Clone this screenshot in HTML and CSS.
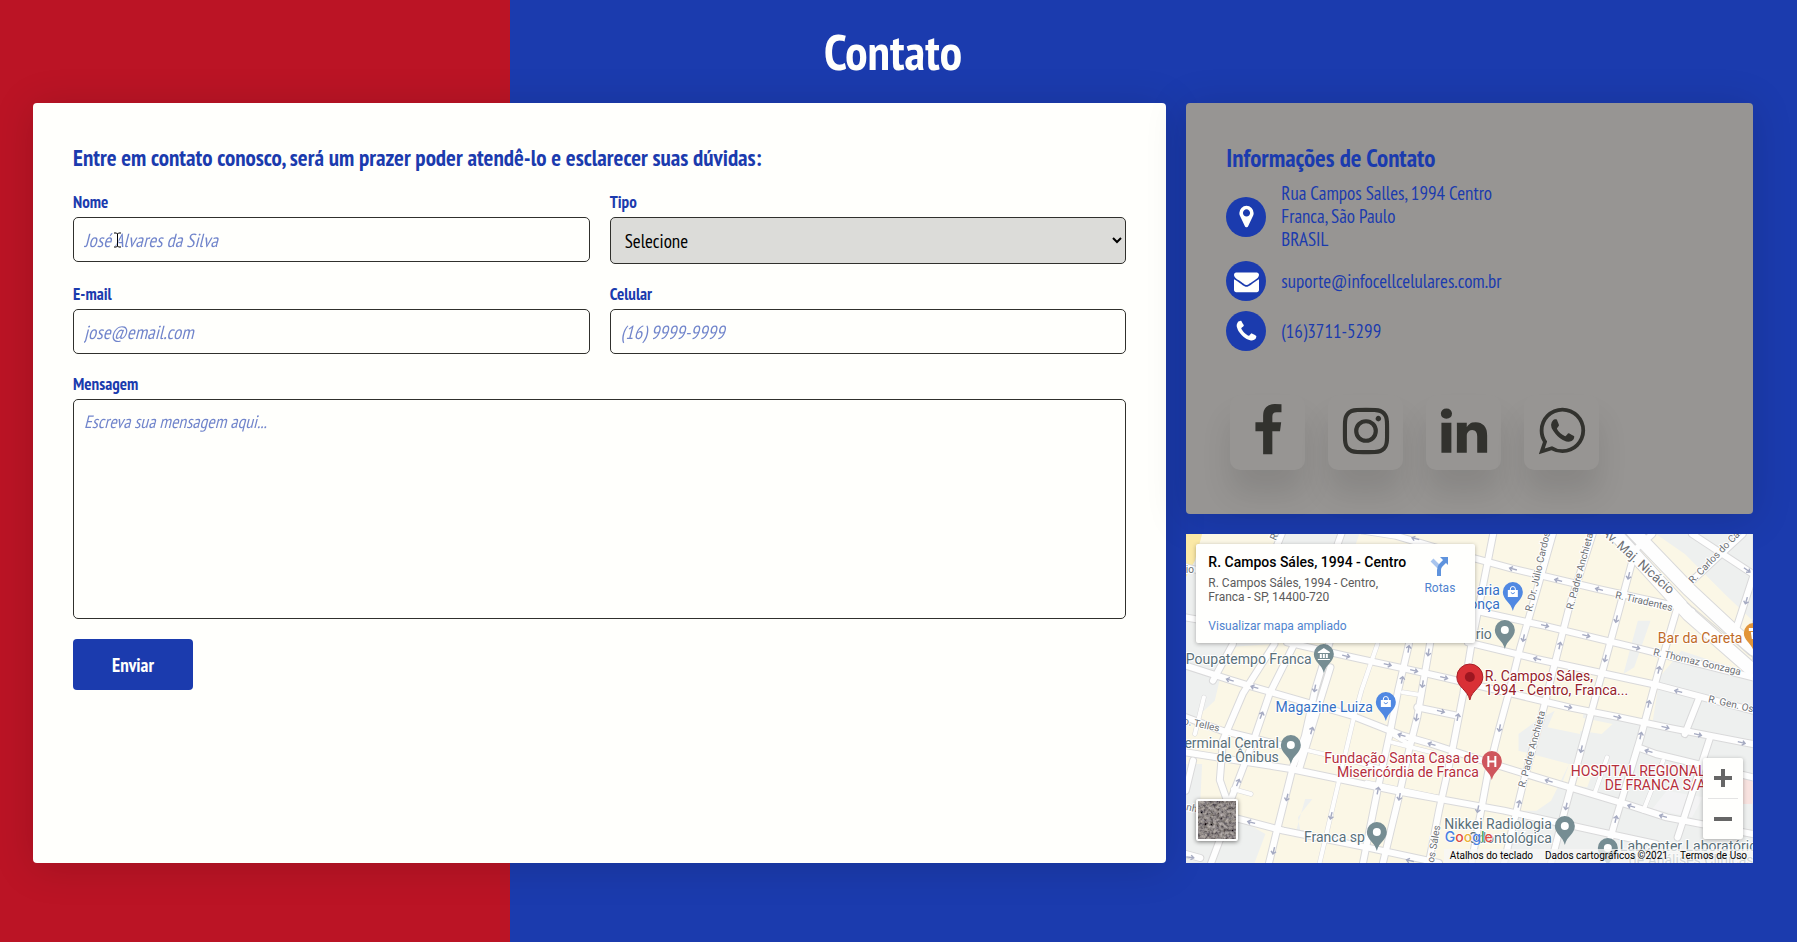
FILE: index.html
```html
<!DOCTYPE html>
<html lang="pt-BR">
<head>
<meta charset="utf-8">
<title>Contato</title>
<meta name="viewport" content="width=device-width, initial-scale=1">
<link rel="stylesheet" href="styles.css">
</head>
<body>
<main class="contact">
  <h1 class="contact-title">Contato</h1>
  <div class="contact-grid">
    <section class="card form-card">
      <h2 class="card-title form-title">Entre em contato conosco, será um prazer poder atendê-lo e esclarecer suas dúvidas:</h2>
      <form class="form">
        <div class="field">
          <label class="label" for="nome">Nome</label>
          <div class="control">
            <input class="input" id="nome" type="text" placeholder="José Alvares da Silva">
            <svg class="caret" viewBox="0 0 9 16" aria-hidden="true"><path class="caret-halo" d="M1 1H3.500L4.500 2L5.500 1H8M4.500 2V14M1 15H3.500L4.500 14L5.500 15H8"/><path class="caret-line" d="M1 1H3.500L4.500 2L5.500 1H8M4.500 2V14M1 15H3.500L4.500 14L5.500 15H8"/></svg>
          </div>
        </div>
        <div class="field">
          <label class="label" for="tipo">Tipo</label>
          <select class="input select" id="tipo"><option>Selecione</option></select>
        </div>
        <div class="field">
          <label class="label" for="email">E-mail</label>
          <input class="input" id="email" type="email" placeholder="jose@email.com">
        </div>
        <div class="field">
          <label class="label" for="celular">Celular</label>
          <input class="input" id="celular" type="tel" placeholder="(16) 9999-9999">
        </div>
        <div class="field field-wide">
          <label class="label" for="mensagem">Mensagem</label>
          <textarea class="input textarea" id="mensagem" placeholder="Escreva sua mensagem aqui..."></textarea>
        </div>
        <button class="submit" type="submit">Enviar</button>
      </form>
    </section>

    <section class="card info-card">
      <h2 class="card-title">Informações de Contato</h2>
      <ul class="info-list">
        <li class="info-item"><span class="info-icon"><svg viewBox="0 0 1792 1792"><path d="M1152 640q0-106-75-181t-181-75-181 75-75 181 75 181 181 75 181-75 75-181zm256 0q0 109-33 179l-364 774q-16 33-47.500 52t-67.500 19-67.500-19-46.500-52l-365-774q-33-70-33-179 0-212 150-362t362-150 362 150 150 362z"/></svg></span><span>Rua Campos Salles, 1994 Centro<br>Franca, São Paulo<br>BRASIL</span></li>
        <li class="info-item"><span class="info-icon"><svg viewBox="0 0 1792 1792"><path d="M1792 710v794q0 66-47 113t-113 47h-1472q-66 0-113-47t-47-113v-794q44 49 101 87 362 246 497 345 57 42 92.500 65.500t94.500 48 110 24.500h2q51 0 110-24.500t94.500-48 92.500-65.500q170-123 498-345 57-39 100-87zm0-294q0 79-49 151t-122 123q-376 261-468 325-10 7-42.500 31t-54 38.500-52 32.500-57.500 27-50 9h-2q-23 0-50-9t-57.500-27-52-32.500-54-38.500-42.500-31q-91-64-262-182.500t-205-142.500q-62-42-117-115.500t-55-136.500q0-78 41.500-130t118.500-52h1472q65 0 112.500 47t47.500 113z"/></svg></span><span>suporte@infocellcelulares.com.br</span></li>
        <li class="info-item"><span class="info-icon"><svg viewBox="0 0 1792 1792"><path d="M1600 1240q0 27-10 70.500t-21 68.500q-21 50-122 106-94 51-186 51-27 0-53-3.500t-57.500-12.500-47-14.500-55.500-20.500-49-18q-98-35-175-83-127-79-264-216t-216-264q-48-77-83-175-3-9-18-49t-20.500-55.500-14.500-47-12.500-57.500-3.500-53q0-92 51-186 56-101 106-122 25-11 68.500-21t70.500-10q14 0 21 3 18 6 53 76 11 19 30 54t35 63.500 31 53.500q3 4 17.500 25t21.500 35.500 7 28.500q0 20-28.500 50t-62 55-62 53-28.500 46q0 9 5 22.500t8.500 20.500 14 24 11.500 19q76 137 174 235t235 174q2 1 19 11.500t24 14 20.500 8.500 22.500 5q18 0 46-28.500t53-62 55-62 50-28.500q14 0 28.500 7t35.500 21.500 25 17.500q25 15 53.500 31t63.500 35 54 30q70 35 76 53 3 7 3 21z"/></svg></span><span>(16)3711-5299</span></li>
      </ul>
      <ul class="social">
        <li><a class="social-link" href="#" aria-label="Facebook"><svg viewBox="0 0 1792 1792"><path d="M1343 12v264h-157q-86 0-116 36t-30 108v189h293l-39 296h-254v759h-306v-759h-255v-296h255v-218q0-186 104-288.500t277-102.500q147 0 228 12z"/></svg></a></li>
        <li><a class="social-link" href="#" aria-label="Instagram"><svg viewBox="0 0 1792 1792"><path d="M1152 896q0-106-75-181t-181-75-181 75-75 181 75 181 181 75 181-75 75-181zm138 0q0 164-115 279t-279 115-279-115-115-279 115-279 279-115 279 115 115 279zm108-410q0 38-27 65t-65 27-65-27-27-65 27-65 65-27 65 27 27 65zm-502-220q-7 0-76.500-.5t-105.500 0-96.500 3-103 10-71.500 18.500q-50 20-88 58t-58 88q-11 29-18.500 71.500t-10 103-3 96.500 0 105.500.5 76.500-.5 76.500 0 105.500 3 96.500 10 103 18.500 71.500q20 50 58 88t88 58q29 11 71.500 18.500t103 10 96.500 3 105.500 0 76.500-.5 76.500.5 105.500 0 96.500-3 103-10 71.500-18.500q50-20 88-58t58-88q11-29 18.500-71.500t10-103 3-96.500 0-105.500-.5-76.500.5-76.500 0-105.500-3-96.500-10-103-18.500-71.500q-20-50-58-88t-88-58q-29-11-71.500-18.500t-103-10-96.500-3-105.500 0-76.500.5zm768 630q0 229-5 317-10 208-124 322t-322 124q-88 5-317 5t-317-5q-208-10-322-124t-124-322q-5-88-5-317t5-317q10-208 124-322t322-124q88-5 317-5t317 5q208 10 322 124t124 322q5 88 5 317z"/></svg></a></li>
        <li><a class="social-link" href="#" aria-label="LinkedIn"><svg viewBox="0 0 1792 1792"><path d="M477 625v991h-330v-991h330zm21-306q1 73-50.500 122t-135.500 49h-2q-82 0-132-49t-50-122q0-74 51.500-122.500t134.500-48.500 133 48.500 51 122.500zm1166 729v568h-329v-530q0-105-40.500-164.500t-126.500-59.500q-63 0-105.500 34.500t-63.500 85.500q-11 30-11 81v553h-329q2-399 2-647t-1-296l-1-48h329v144h-2q20-32 41-56t56.500-52 87-43.500 114.500-15.500q171 0 275 113.500t104 332.500z"/></svg></a></li>
        <li><a class="social-link" href="#" aria-label="WhatsApp"><svg viewBox="0 0 1792 1792"><path d="M1113 974q13 0 97.500 44t89.500 53q2 5 2 15 0 33-17 76-16 39-71 65.500t-102 26.500q-57 0-190-62-98-45-170-118t-148-185q-72-107-71-194v-8q3-91 74-158 24-22 52-22 6 0 18 1.500t19 1.500q19 0 26.500 6.500t15.500 27.500q8 20 33 88t25 75q0 21-34.500 57.500t-34.500 46.500q0 7 5 15 34 73 102 137 56 53 151 101 12 7 22 7 15 0 54-48.500t52-48.500zm-203 530q127 0 243.500-50t200.500-134 134-200.500 50-243.500-50-243.500-134-200.500-200.500-134-243.500-50-243.500 50-200.500 134-134 200.500-50 243.500q0 203 120 368l-79 233 242-77q158 104 345 104zm0-1382q153 0 292.500 60t240.500 161 161 240.500 60 292.500-60 292.500-161 240.500-240.500 161-292.500 60q-195 0-365-94l-417 134 136-405q-108-178-108-389 0-153 60-292.500t161-240.500 240.500-161 292.500-60z"/></svg></a></li>
      </ul>
    </section>

    <section class="map" aria-label="Mapa">
      <svg class="map-canvas" viewBox="0 0 567 329" preserveAspectRatio="xMidYMid slice">
        <defs>
          <path id="pin" d="M0 19C-2 10-10 8-10 0A10 10 0 1 1 10 0C10 8 2 10 0 19Z"/>
          <path id="arrow" d="M-11 0H9M2-7L10 0L2 7"/>
          <g id="roads">
            <path d="M265 0L250 40M430 0L420 30M130 330L75 440M245 330L158 478L103 618L94 738L114 800M300 330L232 478L191 608L120 810M430 210L357 470L329 608L297 695L250 898L230 987M400 400L352 568L315 700M617 330L587 470L564 598L532 758L490 987M680 300L640 550L619 640L587 798L545 987M850 0L790 330L767 480L735 660L700 830L672 987M1015 0L960 210L925 340L895 470L865 590L835 720L790 987M1125 0L1060 220L1020 390L990 520L930 760L880 987M1240 60L1190 260L1155 400L1095 640L1050 820L1010 987M1365 200L1305 420L1255 620L1185 870L1155 987M1420 490L1380 600M1450 610L1360 910M1568 130L1520 290M1400 0L1568 120M1390 150L1540 0M1240 50L1290 0M20 680L0 770M100 900L70 987"/>
            <path d="M490-10L580 5L720 50L900 103L1140 165L1350 215L1400 232M0 100L60 115M0 250L60 262M780 225L990 275L1240 340L1568 430M780 325L970 375L1290 450L1568 530M280 325L440 365L630 410L720 432L1060 520L1190 548L1330 580L1568 630M0 395L120 437L190 460L460 545L600 605L680 630L850 690L1000 740L1230 815L1330 850L1568 900M0 550L100 590L290 640M0 655L290 705L600 775L880 830L1130 890L1300 930M130 850L270 890L500 940L700 987M1250 640L1300 660L1568 730M640 520L750 545M0 960L40 972"/>
          </g>
          <path id="lanes" d="M530 330L486 468L463 558L426 728L370 987M340 650L420 670L600 720M600 475L645 482M570 600L620 632M130 765L180 780M50 490L25 600M1165 670L1130 780M1320 680L1265 830M570 625L680 655M700 790L500 745"/>
          <path id="avenue" d="M1180-10L1390 240L1568 410M1235-10L1390 165L1568 345"/>
          <filter id="aerial" x="0" y="0" width="1" height="1"><feTurbulence type="fractalNoise" baseFrequency=".32" numOctaves="3" seed="8"/><feColorMatrix values="1.300 .3 0 0 -.31 1.200 .3 0 0 -.31 1.100 .3 .1 0 -.32 0 0 0 0 1"/></filter>
        </defs>
        <rect class="land" width="567" height="329"/>
        <svg width="567" height="329" viewBox="0 0 1568 987" preserveAspectRatio="none">
          <path class="block" d="M0 110L30 40H250L240 330L115 340L80 500L0 580ZM0 690H45L40 800H140V850L220 900L190 987H0ZM270 0H480L470 30H260ZM1300 0H1568V260L1490 180L1380 60ZM1568 420L1370 350L1310 430L1290 570L1100 540L1090 600L1000 580L1020 530L970 560L920 600V650L1060 690L1010 800L970 830H920L880 987H1568ZM1250 260H1285L1240 400L1210 420ZM330 795H350L310 850L320 910H300Z"/>
          <path class="sun" d="M0 0H45L25 80L0 130Z"/>
          <path class="land" d="M1090 550L1180 570L1150 600L1090 590ZM1060 690L1130 700L1110 760L1040 750Z"/>
          <path class="clinic" d="M1535 730H1568V810H1535Z"/>
          <path class="yard" d="M1330 770L1430 790L1400 850L1290 825Z"/>
          <use href="#lanes" class="edge edge-thin"/><use href="#roads" class="edge"/><use href="#avenue" class="edge edge-wide"/>
          <use href="#lanes" class="road road-thin"/><use href="#roads" class="road"/><use href="#avenue" class="road road-wide"/>
          <path class="median" d="M1385 205L1568 370"/>
          <g class="arrows">
            <use href="#arrow" transform="translate(635 14) rotate(196)"/><use href="#arrow" transform="translate(905 105) rotate(196)"/><use href="#arrow" transform="translate(1030 139) rotate(196)"/><use href="#arrow" transform="translate(1143 166) rotate(196)"/>
            <use href="#arrow" transform="translate(993 275) rotate(15)"/><use href="#arrow" transform="translate(1107 305) rotate(15)"/><use href="#arrow" transform="translate(1245 341) rotate(15)"/><use href="#arrow" transform="translate(972 375) rotate(195)"/><use href="#arrow" transform="translate(1362 472) rotate(195)"/>
            <use href="#arrow" transform="translate(443 366) rotate(15)"/><use href="#arrow" transform="translate(558 392) rotate(15)"/><use href="#arrow" transform="translate(631 410) rotate(15)"/><use href="#arrow" transform="translate(714 431) rotate(15)"/><use href="#arrow" transform="translate(1057 519) rotate(15)"/><use href="#arrow" transform="translate(1193 549) rotate(15)"/><use href="#arrow" transform="translate(1326 580) rotate(15)"/><use href="#arrow" transform="translate(1416 602) rotate(15)"/><use href="#arrow" transform="translate(1537 626) rotate(15)"/>
            <use href="#arrow" transform="translate(122 438) rotate(198)"/><use href="#arrow" transform="translate(190 460) rotate(198)"/><use href="#arrow" transform="translate(597 604) rotate(198)"/><use href="#arrow" transform="translate(680 631) rotate(198)"/><use href="#arrow" transform="translate(1004 741) rotate(198)"/><use href="#arrow" transform="translate(1232 817) rotate(198)"/><use href="#arrow" transform="translate(1320 847) rotate(198)"/><use href="#arrow" transform="translate(1280 652) rotate(198)"/><use href="#arrow" transform="translate(181 865) rotate(195)"/><use href="#arrow" transform="translate(705 532) rotate(14)"/><use href="#arrow" transform="translate(620 980) rotate(195)"/><use href="#arrow" transform="translate(12 970) rotate(8)"/>
            <use href="#arrow" transform="translate(616 345) rotate(-82)"/><use href="#arrow" transform="translate(598 438) rotate(-80)"/><use href="#arrow" transform="translate(671 355) rotate(98)"/><use href="#arrow" transform="translate(655 450) rotate(98)"/><use href="#arrow" transform="translate(638 550) rotate(98)"/><use href="#arrow" transform="translate(752 550) rotate(-80)"/><use href="#arrow" transform="translate(357 463) rotate(100)"/><use href="#arrow" transform="translate(348 590) rotate(-75)"/><use href="#arrow" transform="translate(209 544) rotate(-70)"/><use href="#arrow" transform="translate(144 746) rotate(-70)"/><use href="#arrow" transform="translate(280 790) rotate(102)"/><use href="#arrow" transform="translate(243 950) rotate(102)"/><use href="#arrow" transform="translate(402 845) rotate(102)"/><use href="#arrow" transform="translate(531 770) rotate(-80)"/><use href="#arrow" transform="translate(591 788) rotate(100)"/>
            <use href="#arrow" transform="translate(868 582) rotate(100)"/><use href="#arrow" transform="translate(808 825) rotate(100)"/><use href="#arrow" transform="translate(921 810) rotate(-78)"/><use href="#arrow" transform="translate(1034 335) rotate(-78)"/><use href="#arrow" transform="translate(934 312) rotate(102)"/><use href="#arrow" transform="translate(1225 125) rotate(102)"/><use href="#arrow" transform="translate(1191 255) rotate(102)"/><use href="#arrow" transform="translate(1160 373) rotate(102)"/><use href="#arrow" transform="translate(1094 645) rotate(102)"/><use href="#arrow" transform="translate(1052 817) rotate(102)"/><use href="#arrow" transform="translate(1308 408) rotate(-78)"/><use href="#arrow" transform="translate(1280 510) rotate(-78)"/><use href="#arrow" transform="translate(1258 605) rotate(-78)"/><use href="#arrow" transform="translate(1189 856) rotate(-78)"/><use href="#arrow" transform="translate(1550 200) rotate(105)"/><use href="#arrow" transform="translate(1552 108) rotate(38)"/>
          </g>
        </svg>
        <g class="street">
          <text transform="translate(346 78) rotate(-77)">R. Dr. Júlio Cardoso</text>
          <text transform="translate(387 76) rotate(-75)">R. Padre Anchieta</text>
          <text transform="translate(339 254) rotate(-75)">R. Padre Anchieta</text>
          <text transform="translate(429 64) rotate(13)">R. Tiradentes</text>
          <text transform="translate(467 121) rotate(13)">R. Thomaz Gonzaga</text>
          <text transform="translate(522 168) rotate(13)">R. Gen. Osório</text>
          <text transform="translate(507 50) rotate(-46)">R. Carlos do Carmo</text>
          <text transform="translate(-3 190) rotate(12)">o. Telles</text>
          <text transform="translate(0 276) rotate(12)">nh</text>
          <text transform="translate(248 329) rotate(-80)">os Sáles</text>
          <text transform="translate(90 7) rotate(-66)">R.</text>
          <text x="0" y="39">io</text>
          <text class="street-big" transform="translate(415 -1) rotate(42)">Av. Maj. Nicácio</text>
        </g>
        <g class="place">
          <text x="0" y="130">Poupatempo Franca</text>
          <text class="end" x="93" y="214">Terminal Central</text><text class="end" x="93" y="228">de Ônibus</text>
          <text class="end" x="179" y="308">Franca sp</text>
          <text class="end" x="306" y="105">rio</text>
          <text class="end" x="366" y="295">Nikkei Radiologia</text><text class="end" x="366" y="309">Odontológica</text>
          <text x="434" y="317">Labcenter Laboratório</text><text x="443" y="331">de Análises Clínicas</text>
          <g class="shop"><text class="end" x="187" y="178">Magazine Luiza</text><text class="end" x="314" y="61">aria</text><text class="end" x="314" y="75">onça</text></g>
          <g class="health"><text class="end" x="293" y="229">Fundação Santa Casa de</text><text class="end" x="293" y="243">Misericórdia de Franca</text><text x="385" y="242">HOSPITAL REGIONAL</text><text x="419" y="256">DE FRANCA S/A</text></g>
          <text class="food" x="472" y="109">Bar da Careta</text>
          <g class="target"><text x="299" y="147">R. Campos Sáles,</text><text x="299" y="161">1994 - Centro, Franca...</text></g>
        </g>
        <g transform="translate(1 0)">
          <g class="pin"><use href="#pin" x="137" y="120"/><use href="#pin" x="104" y="211"/><use href="#pin" x="190" y="298"/><use href="#pin" x="318" y="96"/><use href="#pin" x="378" y="292"/><use href="#pin" x="421" y="314"/></g>
          <g class="pin-blue"><use href="#pin" x="199" y="168"/><use href="#pin" x="326" y="58"/></g>
          <use class="pin-red" href="#pin" x="305" y="227"/><use class="pin-orange" href="#pin" x="567" y="99"/>
          <g class="pin-mark"><circle cx="104" cy="211" r="4"/><circle cx="190" cy="298" r="4"/><circle cx="318" cy="96" r="4"/><circle cx="378" cy="292" r="4"/><circle cx="421" cy="314" r="4"/>
            <path d="M131 118L137 114L143 118V119H131ZM133 120H135V124H133ZM136 120H138V124H136ZM139 120H141V124H139ZM131 125H143V126H131Z"/>
            <path d="M194 166H204V173H194ZM321 56H331V63H321ZM562 94H567V97H562ZM564 98H567V105H565Z"/></g>
          <path class="bag-handle" d="M196.500 166V165A2.500 2.500 0 0 1 201.500 165V166M323.500 56V55A2.500 2.500 0 0 1 328.500 55V56"/>
          <path class="bag-smile" d="M197 168.500Q199 171 201 168.500M324 58.500Q326 61 328 58.500"/>
          <path class="mark-h" d="M301.500 222V233M308.500 222V233M301.500 227.500H308.500"/>
        </g>
        <path class="marker" d="M284 166C282 156 271 153 271 143A13 13 0 1 1 297 143C297 153 286 156 284 166Z"/><circle class="marker-dot" cx="284" cy="143" r="5"/>
        <text class="google" x="259" y="308"><tspan class="g-blue">G</tspan><tspan class="g-red">o</tspan><tspan class="g-yellow">o</tspan><tspan class="g-blue">g</tspan><tspan class="g-green">l</tspan><tspan class="g-red">e</tspan></text>
      </svg>
      <div class="place-card">
        <div class="place-text">
          <strong class="place-name">R. Campos Sáles, 1994 - Centro</strong>
          <span class="place-address">R. Campos Sáles, 1994 - Centro,<br>Franca - SP, 14400-720</span>
          <a class="map-link" href="#">Visualizar mapa ampliado</a>
        </div>
        <a class="map-link routes" href="#"><svg viewBox="0 0 20 20"><path class="route-soft" d="M2 4L9 11"/><path class="route-strong" d="M9 20V14Q9 11 11 9L15 5"/><path class="route-head" d="M10 1H18V9Z"/></svg>Rotas</a>
      </div>
      <button class="layers" type="button" aria-label="Mostrar imagens de satélite"><svg viewBox="0 0 38 38"><rect width="38" height="38" filter="url(#aerial)"/></svg></button>
      <div class="zoom">
        <button class="zoom-button" type="button" aria-label="Aumentar o zoom"><svg viewBox="0 0 18 18"><path d="M0 9H18M9 0V18"/></svg></button>
        <button class="zoom-button" type="button" aria-label="Diminuir o zoom"><svg viewBox="0 0 18 18"><path d="M0 9H18"/></svg></button>
      </div>
      <footer class="map-footer"><button class="footer-link" type="button">Atalhos do teclado</button><span>Dados cartográficos ©2021</span><a class="footer-link" href="#">Termos de Uso</a></footer>
    </section>
  </div>
</main>
</body>
</html>
```
FILE: styles.css
```css
* { box-sizing: border-box; }

body {
  margin: 0;
  color: #1b3bae;
  font-family: "PT Sans Narrow", "Liberation Sans Narrow", "Open Sans", sans-serif;
  font-size: 19px;
}

.contact {
  min-height: 100vh;
  padding: 22px 44px 40px 33px;
  background: linear-gradient(90deg, #bb1425 28.4%, #1b3bae 28.4%);
}

.contact-title {
  margin: 0 0 21px;
  color: #fffffc;
  font-size: 50px;
  line-height: 60px;
  text-align: center;
}

.contact-grid {
  display: grid;
  grid-template-columns: 2fr 1fr;
  grid-template-rows: auto 329px;
  gap: 20px;
}

.card {
  padding: 40px;
  border-radius: 4px;
  box-shadow: 0 4px 40px rgba(0, 0, 0, .15);
}

.form-card { grid-row: span 2; background: #fffffc; }
.info-card { background: #979593; }

.card-title {
  margin: 0;
  font-size: 25px;
  line-height: 30px;
}

.form-title { font-size: 23px; }

.form {
  display: grid;
  grid-template-columns: 1fr 1fr;
  align-items: start;
  gap: 20px;
  margin-top: 19px;
}

.field { display: flex; flex-direction: column; gap: 5px; }
.field-wide { grid-column: span 2; }
.label { font-size: 17px; font-weight: 700; line-height: 20px; }
.control { position: relative; display: flex; }

.input {
  width: 100%;
  height: 45px;
  padding: 0 10px;
  border: 1px solid #30302c;
  border-radius: 5px;
  background: #fffffc;
  color: #000;
  font-family: inherit;
  font-size: 19px;
}

.input::placeholder { color: #1b3bae; opacity: .62; font-style: italic; }
.select { height: 47px; background: #dcdcd9; }
.textarea { display: block; height: 220px; padding: 10px; font-size: 18px; resize: none; }

.caret {
  position: absolute;
  left: 40px;
  top: 15px;
  width: 9px;
  height: 16px;
  fill: none;
}

.caret-halo { stroke: #fff; stroke-width: 2; }
.caret-line { stroke: #000; stroke-width: 1; }

.submit {
  justify-self: start;
  width: 120px;
  height: 51px;
  border: 0;
  border-radius: 4px;
  background: #1b3bae;
  color: #fffffc;
  font-family: inherit;
  font-size: 19px;
  font-weight: 700;
}

.info-list, .social { margin: 0; padding: 0; list-style: none; }
.info-list { display: flex; flex-direction: column; gap: 10px; margin-top: 9px; }
.info-item { display: flex; align-items: center; gap: 15px; line-height: 23px; }

.info-icon {
  display: grid;
  place-items: center;
  flex: none;
  width: 40px;
  height: 40px;
  border-radius: 50%;
  background: #1b3bae;
}

.info-icon svg { width: 25px; height: 25px; fill: #fffffc; }

.social { display: flex; gap: 23px; margin-top: 40px; padding: 4px; }

.social-link {
  display: grid;
  place-items: center;
  width: 75px;
  height: 75px;
  padding-bottom: 4px;
  border-radius: 10px;
  background: #979593;
  box-shadow: 0 24px 30px rgba(0, 0, 0, .1);
}

.social-link svg { width: 54px; height: 54px; fill: #32322e; }

.map {
  position: relative;
  overflow: hidden;
  font-family: Roboto, sans-serif;
  font-size: 12px;
}

.map-canvas { display: block; width: 100%; height: 100%; }
.land { fill: #fbf7e6; }
.block { fill: #eef0ef; }
.sun { fill: #fbe9a6; }
.clinic { fill: #f8e2df; }
.yard { fill: #f3f3f4; }
.edge, .road { fill: none; stroke-linejoin: round; stroke-linecap: round; }
.edge { stroke: #d9d9da; stroke-width: 8px; }
.edge-thin { stroke-width: 5px; }
.edge-wide { stroke-width: 15px; }
.road { stroke: #fefefe; stroke-width: 6px; }
.road-thin { stroke-width: 4px; }
.road-wide { stroke-width: 13px; }
#roads path, #lanes, #avenue { vector-effect: non-scaling-stroke; }
.median { fill: none; stroke: #d9d9da; stroke-width: 3; }
.arrows { fill: none; stroke: #a6abc2; stroke-width: 4; }

.street text, .place text { paint-order: stroke; stroke: #fff; stroke-width: 2px; }
.street { fill: #6d7074; font-size: 10px; }
.street .street-big { font-size: 13px; }
.place { fill: #5a7079; font-size: 14px; }
.end { text-anchor: end; }
.shop { fill: #3570c4; }
.health { fill: #b52f3c; }
.food { fill: #bf6a28; }
.target { fill: #951d2a; }
.pin { fill: #768d93; }
.pin-blue { fill: #5088e2; }
.pin-red { fill: #cf565d; }
.pin-orange { fill: #e2953a; }
.pin-mark { fill: #fff; }
.bag-handle, .mark-h { fill: none; stroke: #fff; }
.mark-h { stroke-width: 2; }
.bag-smile { fill: none; stroke: #5088e2; }
.marker { fill: #d93036; stroke: #a81f28; }
.marker-dot { fill: #9d1620; }
.google { font-family: Inter, sans-serif; font-size: 14px; font-weight: 500; paint-order: stroke; stroke: #fff; stroke-width: 1px; }
.g-blue { fill: #4a80e0; }
.g-red { fill: #dd4b42; }
.g-yellow { fill: #edb236; }
.g-green { fill: #45a35b; }

.place-card {
  position: absolute;
  left: 10px;
  top: 10px;
  display: flex;
  justify-content: space-between;
  width: 279px;
  height: 99px;
  padding: 9px 20px 9px 12px;
  border-radius: 2px;
  background: #fffffd;
  box-shadow: 0 1px 4px rgba(0, 0, 0, .3);
}

.place-text { display: flex; flex-direction: column; line-height: 14px; }
.place-name { color: #000; font-size: 14px; font-weight: 500; line-height: 18px; }
.place-address { margin-top: 5px; color: #5b5b5b; }
.map-link { color: #4f83cf; text-decoration: none; }
.place-text .map-link { margin-top: 15px; }
.routes { display: flex; flex-direction: column; align-items: center; gap: 5px; padding-top: 3px; line-height: 14px; }
.routes svg { width: 20px; height: 20px; fill: none; stroke-width: 4; }
.route-soft { stroke: #a9c5ee; }
.route-strong { stroke: #5f93dd; }
.route-head { fill: #5f93dd; }

.layers {
  position: absolute;
  left: 10px;
  bottom: 22px;
  width: 42px;
  height: 42px;
  padding: 0;
  border: 2px solid #fff;
  border-radius: 2px;
  box-shadow: 0 1px 4px rgba(0, 0, 0, .5);
}

.layers svg { display: block; width: 38px; height: 38px; filter: brightness(.75); }

.zoom {
  position: absolute;
  right: 10px;
  bottom: 24px;
  display: flex;
  flex-direction: column;
  width: 40px;
  padding: 0 5px;
  border-radius: 2px;
  background: #fffffd;
  box-shadow: 0 1px 4px rgba(0, 0, 0, .3);
}

.zoom-button {
  display: grid;
  place-items: center;
  height: 40px;
  padding: 0;
  border: 0;
  background: none;
}

.zoom-button + .zoom-button { height: 41px; border-top: 1px solid #e4e4e4; }
.zoom-button svg { width: 18px; height: 18px; fill: none; stroke: #666; stroke-width: 4; }

.map-footer {
  position: absolute;
  right: 0;
  bottom: 0;
  display: flex;
  gap: 12px;
  padding: 0 6px;
  background: rgba(247, 247, 245, .75);
  color: #000;
  font-size: 10px;
  line-height: 14px;
}

.footer-link {
  padding: 0;
  border: 0;
  background: none;
  color: inherit;
  font: inherit;
  text-decoration: none;
}
```
